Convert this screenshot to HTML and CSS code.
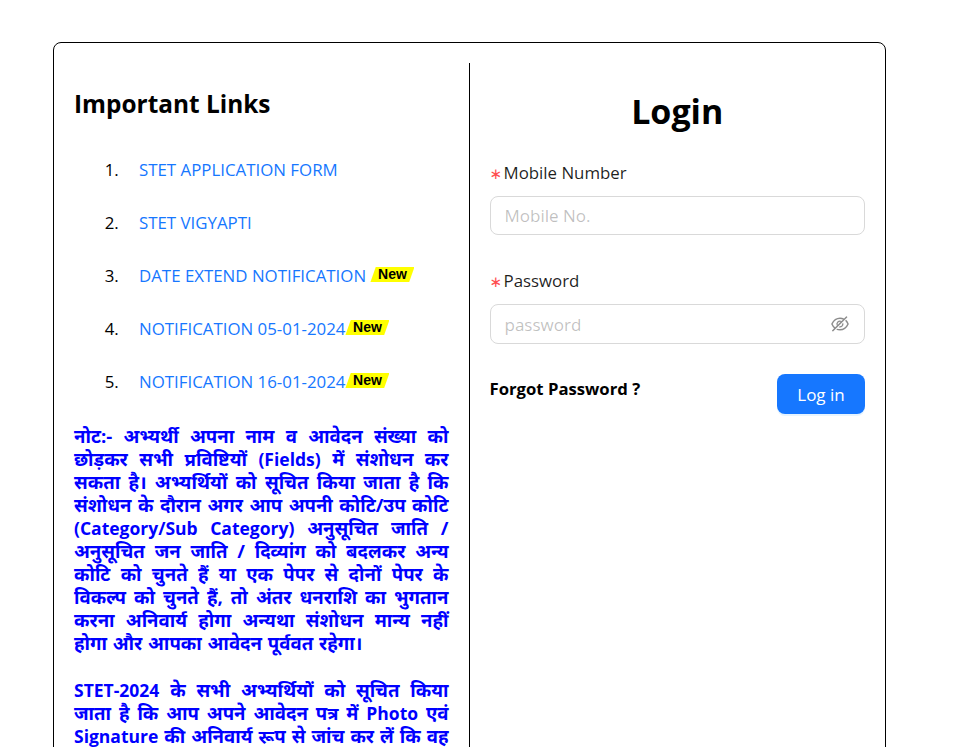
FILE: index.html
```html
<!DOCTYPE html>
<html lang="hi">
<head>
  <meta charset="UTF-8" />
  <meta name="viewport" content="width=device-width, initial-scale=1.0" />
  <title>Login</title>
  <link rel="stylesheet" href="styles.css">
</head>
<body>

  <div class="card">
    <div class="col col-links">
      <h2 class="links-title">Important Links</h2>
      <ol class="links">
        <li><a href="#">STET APPLICATION FORM</a></li>
        <li><a href="#">STET VIGYAPTI</a></li>
        <li><a href="#">DATE EXTEND NOTIFICATION</a> <span class="new">New</span></li>
        <li><a href="#">NOTIFICATION 05-01-2024</a><span class="new">New</span></li>
        <li><a href="#">NOTIFICATION 16-01-2024</a><span class="new">New</span></li>
      </ol>
      <p class="note">नोट:- अभ्यर्थी अपना नाम व आवेदन संख्या को छोड़कर सभी प्रविष्टियों <span class="lat">(Fields)</span> में संशोधन कर सकता है। अभ्यर्थियों को सूचित किया जाता है कि संशोधन के दौरान अगर आप अपनी कोटि/उप कोटि <span class="lat">(Category/Sub Category)</span> अनुसूचित जाति / अनुसूचित जन जाति / दिव्यांग को बदलकर अन्य कोटि को चुनते हैं या एक पेपर से दोनों पेपर के विकल्प को चुनते हैं, तो अंतर धनराशि का भुगतान करना अनिवार्य होगा अन्यथा संशोधन मान्य नहीं होगा और आपका आवेदन पूर्ववत रहेगा।</p>
      <p class="note"><span class="lat">STET-2024</span> के सभी अभ्यर्थियों को सूचित किया जाता है कि आप अपने आवेदन पत्र में <span class="lat">Photo</span> एवं <span class="lat">Signature</span> की अनिवार्य रूप से जांच कर लें कि वह सही है या नहीं।</p>
    </div>

    <div class="col col-login">
      <h1 class="login-title">Login</h1>
      <form>
        <div class="field">
          <label for="mobile"><span class="req">∗</span>Mobile Number</label>
          <div class="input-box"><input id="mobile" type="text" placeholder="Mobile No."></div>
        </div>
        <div class="field">
          <label for="password"><span class="req">∗</span>Password</label>
          <div class="input-box input-pass">
            <input id="password" type="password" placeholder="password">
            <svg class="eye" viewBox="64 64 896 896" fill="currentColor" aria-hidden="true">
              <path d="M942.2 486.2Q889.47 375.11 816.7 305l-50.88 50.88C807.31 395.53 843.45 447.4 874.7 512 791.5 684.2 673.4 766 512 766q-72.67 0-133.87-22.38L323 798.75Q408 838 512 838q288.3 0 430.2-300.3a60.29 60.29 0 000-51.5zm-63.57-320.64L836 122.88a8 8 0 00-11.32 0L715.31 232.2Q624.86 186 512 186q-288.3 0-430.2 300.3a60.3 60.3 0 000 51.5q56.69 119.4 136.5 191.41L112.48 835a8 8 0 000 11.31L155.17 889a8 8 0 0011.31 0l712.15-712.12a8 8 0 000-11.32zM149.3 512C232.6 339.8 350.7 258 512 258c54.54 0 104.13 9.36 149.12 28.39l-70.3 70.3a176 176 0 00-238.13 238.13l-83.42 83.42C223.1 637.49 183.3 582.28 149.3 512zm246.7 0a112.11 112.11 0 01146.2-106.69L401.31 546.2A112 112 0 01396 512z"/>
              <path d="M508 624c-3.46 0-6.87-.16-10.25-.47l-52.82 52.82a176.09 176.09 0 00227.42-227.42l-52.82 52.82c.31 3.38.47 6.79.47 10.25a111.94 111.94 0 01-112 112z"/>
            </svg>
          </div>
        </div>
        <div class="actions">
          <a class="forgot" href="#">Forgot Password ?</a>
          <button type="button">Log in</button>
        </div>
      </form>
    </div>
  </div>

</body>
</html>
```

FILE: styles.css
```css
* {
  box-sizing: border-box;
  margin: 0;
  padding: 0;
}
html, body {
  height: 747px;
  overflow: hidden;
}
body {
  font-family: "Open Sans", "Noto Sans", sans-serif;
  background-color: #fff;
  color: #000;
  padding: 42px 75px 0 53px;
}
.card {
  display: flex;
  align-items: flex-start;
  border: 1px solid #000;
  border-radius: 8px;
  padding: 20px 0;
}
.col {
  width: 50%;
  padding: 0 20px;
}
.col-links {
  border-right: 1px solid #000;
}
.links-title {
  font-size: 24.4px;
  font-weight: 700;
  line-height: 32px;
  margin-top: 25px;
}
.links {
  margin-top: 38px;
  padding: 0 0 1px 65px;
  font-size: 16.85px;
  line-height: 24px;
}
.links li {
  margin-bottom: 29px;
}
.links li::marker {
  content: counter(list-item) ".    \2009";
}
.links a {
  color: #1677ff;
  text-decoration: none;
}
.new {
  display: inline-block;
  vertical-align: 3px;
  width: 44px;
  height: 15px;
  background-color: #ffff00;
  clip-path: polygon(12% 0, 100% 0, 88% 100%, 0 100%);
  font-family: "Liberation Sans", sans-serif;
  font-size: 14px;
  font-weight: 700;
  line-height: 14px;
  text-align: center;
}
.note {
  color: #0000ff;
  font-weight: 700;
  font-size: 18.6px;
  line-height: 23px;
  word-spacing: 1px;
  text-align: justify;
  margin-bottom: 24px;
}
.lat {
  font-size: 17.5px;
  line-height: 1;
}
.login-title {
  font-size: 34px;
  font-weight: 700;
  line-height: 40px;
  text-align: center;
  margin: 28px 0 30px;
}
.field {
  margin-bottom: 34px;
}
.field label {
  display: block;
  font-size: 16.85px;
  line-height: 24px;
  color: rgba(0, 0, 0, 0.88);
  margin-bottom: 11px;
}
.req {
  display: inline-block;
  width: 14px;
  font-family: "DejaVu Sans", sans-serif;
  font-size: 15px;
  line-height: 1;
  color: #ff4d4f;
}
.input-box {
  display: flex;
  align-items: center;
  height: 39px;
  padding: 0 14px;
  border: 1px solid #d9d9d9;
  border-radius: 8px;
  background: #fff;
}
.input-pass {
  height: 40px;
}
.input-box input {
  flex: 1;
  min-width: 0;
  border: none;
  outline: none;
  font: inherit;
  font-size: 17px;
  color: #000;
}
.input-box input::placeholder {
  color: rgba(0, 0, 0, 0.25);
}
.eye {
  width: 18px;
  height: 18px;
  color: rgba(0, 0, 0, 0.45);
  margin-right: 1px;
}
.actions {
  display: flex;
  justify-content: space-between;
  align-items: flex-start;
  margin-top: -4px;
}
.forgot {
  font-size: 16.7px;
  font-weight: 700;
  line-height: 30px;
  color: #000;
  text-decoration: none;
}
.actions button {
  width: 88px;
  height: 40px;
  border: none;
  border-radius: 8px;
  background-color: #1677ff;
  color: #fff;
  font: inherit;
  font-size: 17px;
  cursor: pointer;
  box-shadow: 0 2px 0 rgba(5, 145, 255, 0.1);
}
```
